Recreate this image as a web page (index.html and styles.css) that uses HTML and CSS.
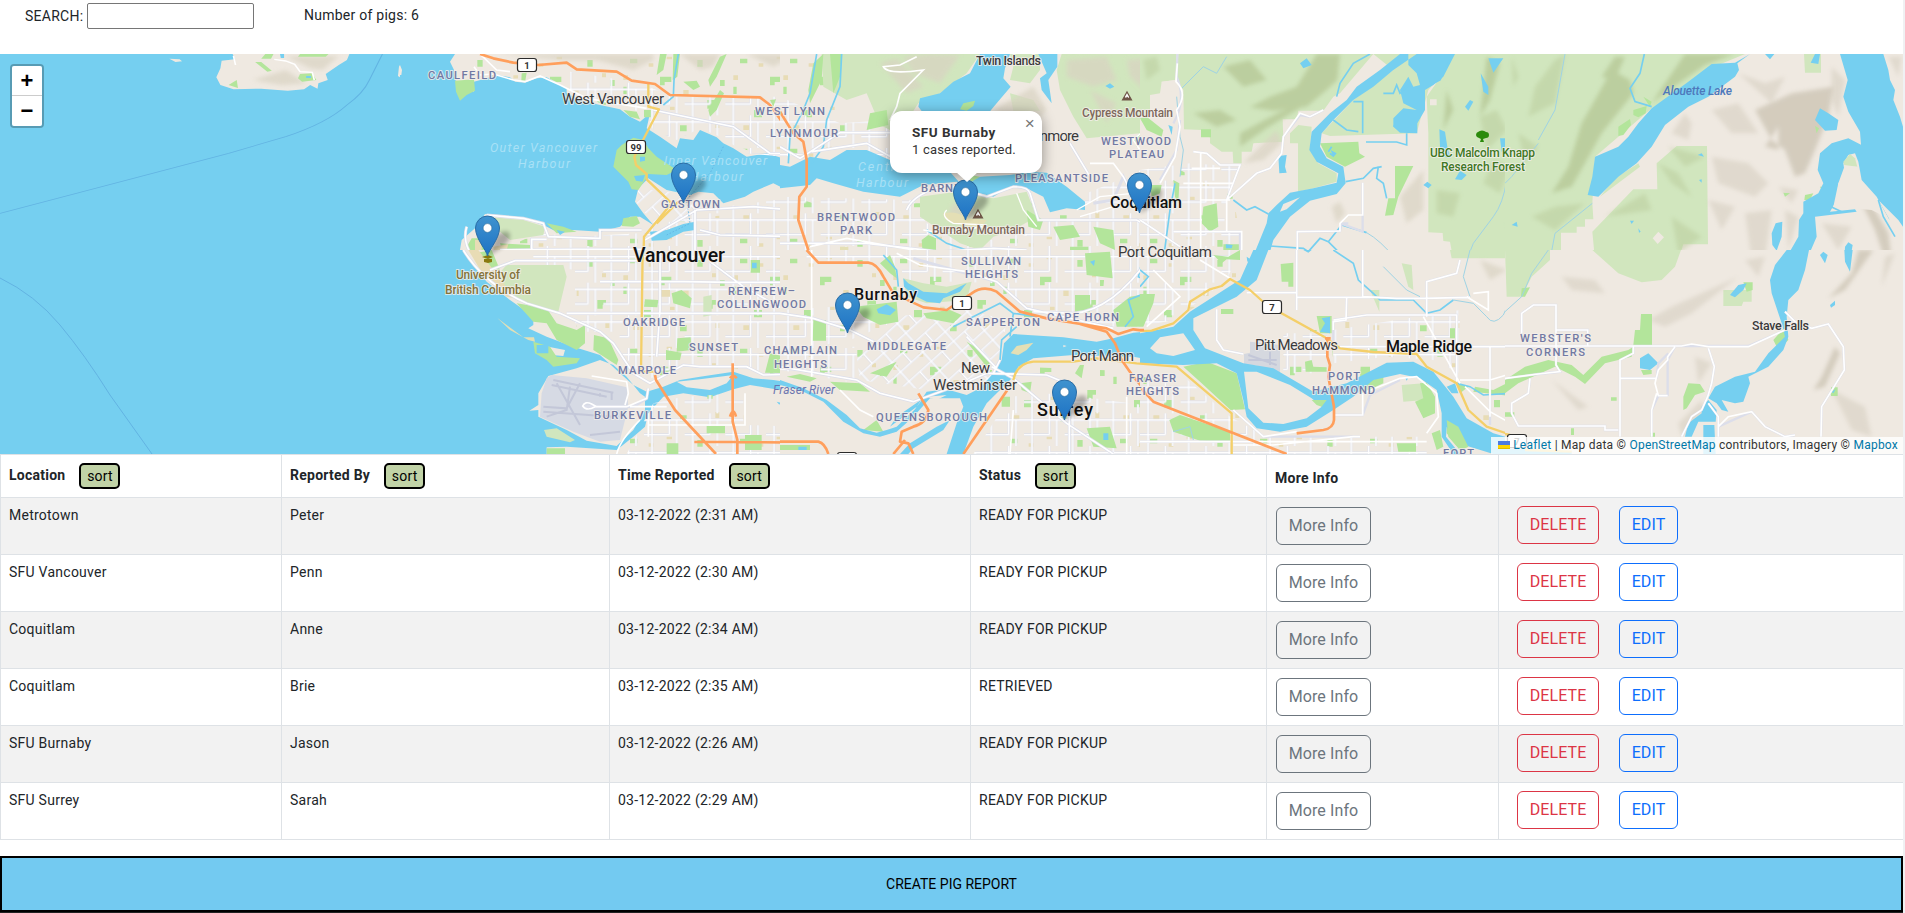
FILE: index.html
```html
<!DOCTYPE html>
<html lang="en">
<head>
<meta charset="utf-8">
<title>Pig Reports</title>
<link rel="stylesheet" href="styles.css">
</head>
<body>
<div class="page">
<header class="toolbar">
  <label class="search">SEARCH: <input type="text" class="search-input"></label>
  <span class="count">Number of pigs: 6</span>
</header>

<section class="map">
<svg class="map-canvas" viewBox="0 54 1903 400" width="1903" height="400">
  <defs>
    <pattern id="streets" width="122" height="98" patternUnits="userSpaceOnUse">
      <path class="st-edge" d="M0 20H122M0 64H76M24 0V98M76 0V64M98 20V98"/>
      <path class="st" d="M0 20H122M0 64H76M24 0V98M76 0V64M98 20V98"/>
    </pattern>
    <pattern id="diag" width="90" height="76" patternUnits="userSpaceOnUse" patternTransform="rotate(-42)">
      <path class="st-edge" d="M0 20H90M0 58H90M24 0V76M68 20V58"/>
      <path class="st" d="M0 20H90M0 58H90M24 0V76M68 20V58"/>
    </pattern>
    <pattern id="lots" width="330" height="270" patternUnits="userSpaceOnUse">
      <path class="park" d="M30 26h22v14h-22zM120 80h34v16h-20v10h-14zM232 30h16v20h-16zM72 180h24v22h-24zM262 150h26v14h-10v12h-16zM180 226h20v18h-20zM300 90h14v18h-14zM10 110h10v22h-10z"/>
      <path class="lot" d="M86 40h14v10h-14zM190 120h16v18h-16zM40 226h18v14h-18zM286 216h12v18h-12zM150 170h14v10h-14zM276 70h12v12h-12zM140 20h16v8h-16zM10 76h14v14h-14z"/>
    </pattern>
    <filter id="soft" x="-20%" y="-20%" width="140%" height="140%"><feGaussianBlur stdDeviation="7"/></filter>
    <filter id="shade" x="-50%" y="-50%" width="200%" height="200%"><feGaussianBlur stdDeviation="2"/></filter>
    <linearGradient id="pin" x1="0" y1="0" x2="0" y2="1"><stop offset="0" stop-color="#3f93cf"/><stop offset="1" stop-color="#1d72c4"/></linearGradient>
    <g id="marker">
      <path d="M0 0L8 -19Q15 -26 21 -24Q25 -19 18 -12Q9 -4 0 0Z" fill="#000" opacity=".28" filter="url(#shade)"/>
      <path d="M0 0C-1 -6 -12 -17 -12 -28A12 12 0 0 1 12 -28C12 -17 1 -6 0 0Z" fill="url(#pin)" stroke="#2a6ca5" stroke-width="1"/>
      <circle cy="-28" r="4.4" fill="#fff" stroke="#2e6c97" stroke-width=".6"/>
    </g>
    <g id="peak"><path d="M-4.5 4L0 -4L4.500 4Z" fill="#fff" stroke="#6f5547" stroke-width="1.200"/><path d="M-4.500 4L-2.500 .5L-1 2L0 .5L1.500 2L2.500 .5L4.500 4Z" fill="#6f5547"/></g>
  </defs>
  <rect class="water" y="54" width="1903" height="400"/>

  <!-- open strait and Bowen Island -->
  <svg x="0" y="0" width="400" height="250" viewBox="0 0 980 750" preserveAspectRatio="none">
    <path class="land" d="M570 162L575 178 543 182 540 205 530 232 540 255 572 268 640 266 705 272 745 268 760 255 778 266 780 250 803 240 798 222 830 195 850 180 856 162ZM415 176L440 178 446 184 430 186ZM975 228L978 195 985 210 980 232Z"/>
    <path class="hill" filter="url(#soft)" d="M700 168L830 168 790 210 760 205ZM620 240L700 210 750 250 690 256Z"/>
    <path class="park" d="M735 162H805L798 170H730ZM650 162H670L664 176 640 176ZM625 186L640 186 666 212 655 215ZM735 222L765 220 775 240 740 245 730 235ZM560 255L580 240 583 264Z"/>
    <path class="water" d="M686 162H696V174H688ZM750 228H762V234H750Z"/>
    <path class="st" d="M572 168L577 195M672 178L700 183 722 193 735 215 765 217 770 240"/>
    <path class="ferry" d="M0 640L560 460 700 410Q800 370 850 315Q890 280 905 240L937 162"/>
  </svg>
  <path class="ferry thin" d="M0 278Q35 295 60 325T110 395L152 454"/>

  <!-- West Vancouver and downtown -->
  <svg x="400" y="50" width="400" height="210" viewBox="0 0 1200 630">
    <path class="land" d="M165 12L150 35 162 60 165 90 222 125 222 95 260 85 290 75 330 82 345 95 375 98 410 85 440 82 470 100 500 115 500 130 540 150 600 165 660 178 690 200 720 215 750 190 740 235 780 260 830 295 840 265 880 270 900 240 950 262 970 280 1000 295 1040 320 1100 310 1165 330 1165 365 1200 370V12ZM0 45L6 60 4 75 0 75Z"/>
    <path fill="url(#lots)" d="M220 12H1200V370L1165 330 1040 300 900 235 830 265 740 220 600 160 440 82 220 90Z"/>
    <path fill="url(#streets)" d="M510 65L700 95 830 140H1200V360L1150 320 1040 310 960 260 900 235 830 270 760 240 740 190 600 155 510 120Z"/>
    <path class="hill" filter="url(#soft)" d="M300 12H760V30L700 60 590 30 480 30ZM840 12H960L940 50 900 60ZM1040 12H1190L1120 50Z"/>
    <path class="park" d="M165 92L222 88 225 122 200 135 180 152 168 125ZM780 12L800 12 790 60 770 75ZM820 12H840L832 80 818 90ZM960 20L980 12 950 80 930 110 925 90ZM960 120L972 130 950 180 930 200 925 180ZM365 70L380 68 376 92 364 92ZM670 180L710 185 720 208 690 200ZM1110 150L1128 148 1120 170ZM850 95L890 92 900 110 880 120Z"/>
    <path class="land" d="M715 415L705 455 730 490 760 525 720 500 690 500 660 530 600 545 520 540 470 545 430 525 370 505 300 495 255 492 225 535 185 570 180 600 215 630H1200V440L1150 415 1120 400 1060 425 1035 440 970 460 940 430 895 425 870 435 800 420 745 385Z"/>
    <path fill="url(#lots)" d="M390 560L1200 470V630H240Z"/>
    <path fill="url(#streets)" d="M520 560L720 550 900 480 1200 440V630H400L390 545Z"/>
    <path fill="url(#diag)" d="M715 415L800 425 890 430 885 510 780 540 710 460Z"/>
    <path class="forest" d="M255 500L370 510 435 530 430 555 330 570 300 545 250 530Z"/>
    <path class="park" d="M300 580L390 585V630H270L310 610ZM215 565L255 565 270 630 225 630 200 590ZM650 300L665 285 700 263 730 270 745 295 770 320 830 360 800 375 745 372 735 390 715 420 695 418 685 395 640 350ZM440 520L490 530 530 545 470 550ZM670 505L710 498 720 520 700 530 665 528ZM1148 435L1190 432 1185 475 1150 470Z"/>
    <path class="lot" d="M225 570H245V600H225ZM280 590L325 582 315 620 285 620Z"/>
    <path class="water" d="M720 320L735 320 735 332 720 335ZM702 378L735 375 728 395 708 392ZM750 545L800 540 850 522 885 515 885 540 850 545 800 570 755 572ZM470 540L495 545 480 555Z"/>
    <path class="water line" d="M835 12L822 90 820 140 790 165M1200 260L1170 285 1165 330"/>
    <path class="st-edge major" d="M200 530Q185 580 225 630M260 495L370 505 430 520 445 560 600 565 600 540 725 540M440 568H395V630M300 600L520 598H730M735 570L890 480 1060 470 1200 482M885 480V630M900 540L960 555 1200 560M760 180L1000 230 1110 310 1200 312"/>
    <path class="st major" d="M200 530Q185 580 225 630M260 495L370 505 430 520 445 560 600 565 600 540 725 540M440 568H395V630M300 600L520 598H730M735 570L890 480 1060 470 1200 482M885 480V630M900 540L960 555 1200 560M760 180L1000 230 1110 310 1200 312M222 50L240 75 280 72 340 90 375 95 420 78 480 105 560 145 740 175M240 12L290 60 330 65"/>
    <path class="yellow" d="M745 100V170L777 178 703 320 708 345 740 372V388L815 460 732 560 730 630M835 455L770 520"/>
    <path class="orange" d="M240 12L280 25 340 38 415 45 500 38 530 58 650 65 695 92 765 102 810 135 1080 142 1110 165 1160 235 1200 270M1197 435V520"/>
    <path class="ferry" stroke-dasharray="5 5" d="M970 290L930 370 860 450 870 520 800 555"/>
  </svg>

  <!-- UBC, Vancouver south, Sea Island -->
  <svg x="400" y="250" width="400" height="210" viewBox="0 0 1200 630">
    <rect class="water" width="1200" height="630"/>
    <path class="land" d="M190 0L220 45 260 95 330 150 380 185 400 210 400 225 385 235 440 260 520 290 600 315 660 370 700 405 740 425 790 410 840 390 900 380 1000 365 1060 385 1120 390 1200 402V0ZM445 378L530 355 600 330 640 345 680 380 720 430 735 440 735 480 700 540 650 588 560 572 500 540 415 500 415 480 388 482 415 465 415 430ZM440 612V592L500 590 650 600 700 560 735 530 745 490 790 440 850 430 930 442 1000 418 1050 405 1200 430V612ZM830 395L900 388 1000 375 980 400 930 420 860 412ZM445 290L495 300 490 318 455 315Z"/>
    <path fill="url(#lots)" d="M530 0H1200V390L1000 355 850 370 750 400 650 320 530 230Z"/>
    <path fill="url(#streets)" d="M400 0H1200V380L1000 350 850 345 740 390 655 300 660 245H525V60L400 40Z"/>
    <path fill="url(#lots)" d="M750 490L840 440 1030 430V520H1200V612H650Z"/>
    <path fill="url(#streets)" d="M760 460L850 440 1030 430V525L1200 530V612H680Z"/>
    <path class="forest" d="M270 100L320 45 490 45 500 80 475 185 430 175 350 150ZM1000 525Z"/>
    <path class="forest" d="M910 140L935 135V195L910 200ZM432 540L470 535 525 570 510 577 440 560Z"/>
    <path class="park" d="M350 160L440 175 470 220 530 240 555 225V280L530 300 470 270 440 220 400 215ZM582 255L625 265 655 330 650 345 580 300ZM400 275L450 290 470 320 540 325 530 340 460 350 440 330 405 310ZM815 130L845 120 875 145 870 175 820 160ZM735 148L775 150 772 172 732 170ZM832 265L872 262 875 300 830 305ZM798 300L845 308 840 330H798ZM1052 30H1080V68H1052ZM1110 310L1200 330V370L1095 368ZM440 595H495V612H440ZM800 580H835V612H800ZM920 528H975V550H920ZM1035 555H1085V600H1035ZM225 10L275 0 300 60 265 55Z"/>
    <path class="water" d="M1056 38H1070V55H1056ZM410 285H445V310H410ZM1130 455L1142 458 1138 464ZM1150 590L1190 585 1200 600H1160Z"/>
    <path class="lot" d="M205 0L235 0 310 100 345 145 320 140 250 75ZM780 120H810V140H780Z"/>
    <path class="sand" d="M292 204L330 240 385 270 405 275 402 262 370 262Z"/>
    <path fill="#d6dae4" d="M455 375L560 385 680 412 685 470 660 570 600 575 520 545 420 500 425 430 440 385Z"/>
    <path class="runway" d="M460 390L640 428M470 400L540 525M455 405L620 440M430 485L640 500M430 470L500 475 540 400M510 410L500 480 440 500M570 555L660 545M600 430V440M635 425V450"/>
    <path class="st-edge major" d="M190 0Q250 100 380 160L480 190 600 245 640 280 700 370 750 400 850 345 900 350H1040L1090 375 1200 372M500 190H1200M780 0V180L770 320M930 35L1030 110 1200 205M600 95H850L1000 97H1200M270 60L345 32H720M550 470H700L740 445 745 415"/>
    <path class="st major" d="M190 0Q250 100 380 160L480 190 600 245 640 280 700 370 750 400 850 345 900 350H1040L1090 375 1200 372M500 190H1200M780 0V180L770 320M930 35L1030 110 1200 205M600 95H850L1000 97H1200M270 60L345 32H720M575 378L680 395 685 430 675 465M585 470H680L740 445 745 415M585 470Q560 485 548 468Q555 452 575 462L590 470M690 470H800M1035 430V525H745M650 612Q660 570 720 510M745 490V560"/>
    <path class="yellow" d="M728 0L723 365H765"/>
    <path class="orange" d="M765 375L768 390 825 480 948 612M998 340V515L1012 570V612M883 576H1010L1200 578M990 385Q1000 370 1010 385M990 500Q1000 470 1008 500"/>
  </svg>

  <!-- North Vancouver east, Burrard Inlet, Port Moody -->
  <svg x="780" y="50" width="400" height="210" viewBox="0 0 1200 630">
    <rect class="land" width="1200" height="630"/>
    <path fill="url(#lots)" d="M0 12H200V330H0ZM100 460H1200V630H0V430Z"/>
    <path fill="url(#streets)" d="M0 140L180 220 330 210 330 330 200 290 100 310 0 320ZM0 440L400 450 440 520 540 560 640 570 780 510H900L920 430 1040 380 1130 420H1200V630H0Z"/>
    <path class="forest" d="M125 12H500L600 12 560 70 480 130 415 160 400 183 330 240 300 225 260 130 200 150 130 110ZM845 12H1200V230L1110 220 1080 250 920 265 880 200 840 120 830 60ZM420 440L530 425 640 445 740 425 770 500 700 540 640 560 600 600 540 580 420 500ZM690 12H780V60L750 100 690 90 700 50ZM690 130L760 150 780 183H700Z"/>
    <path class="hill" filter="url(#soft)" d="M370 20L450 12 540 15 480 100 400 70ZM300 40L350 25 430 110 380 130ZM860 30L980 20 1010 90 940 110 860 80ZM1040 30L1180 20 1170 90 1110 140 1050 80ZM930 120L1010 160 980 220ZM640 180L760 110 800 180 750 230ZM520 460L590 470 580 540 500 500Z"/>
    <path class="park" d="M100 40L130 12 125 90 90 160 85 120ZM150 12L185 12 180 80 160 130ZM270 190L320 180 325 225 260 240ZM425 570L445 555 468 565V612H428ZM1060 270L1100 225 1140 260 1140 300 1110 290 1100 260 1070 290ZM1100 400H1150L1140 460 1100 450ZM740 480L790 510 780 540 745 530ZM820 530L880 525 900 560 840 570ZM940 530L1000 540 1005 600 960 580ZM870 590H925V612H870ZM570 375L600 380 570 405Z"/>
    <path class="sand" d="M490 490Q530 480 560 505L620 510Q610 535 550 525Q490 520 490 490ZM540 370L600 370 700 350 640 340 560 350ZM180 590H205V630H180Z"/>
    <path class="water" d="M600 12L690 12 675 55 670 85 692 110 650 160 625 190 430 190 415 170 420 145 480 130 520 95 570 70ZM775 12H832V50L805 90 815 160 785 120 780 85 800 70ZM976 108L990 100 1003 110 990 116ZM0 345L30 350 90 320 150 330 200 300 260 300 330 330 500 355 550 410 600 380 690 375 750 365 800 368 860 410 915 455 915 480 860 475 810 487 790 440 740 415 690 410 640 440 560 420 530 395 430 405 360 440 250 425 160 400 110 385 90 405 0 415Z"/>
    <path class="water line" d="M110 12L90 130 70 180 30 260 25 340M185 12L180 110 140 210 130 290 95 340M1170 420L1200 440M1165 470L1160 630M440 540L500 580 560 600"/>
    <path class="park" d="M550 160L585 152 580 168 560 182 540 178Z"/>
    <path class="st-edge major" d="M0 290L60 325 180 248 335 248M95 305L260 280 340 325M380 480Q400 430 500 405L620 440 700 410Q745 410 750 430L775 510H1070L1200 580M0 580H260L480 605 640 595 740 600M1090 500L1030 380 1000 450 940 460M870 280L930 380"/>
    <path class="st major" d="M0 290L60 325 180 248 335 248M95 305L260 280 340 325M380 480Q400 430 500 405L620 440 700 410Q745 410 750 430L775 510H1070L1200 580M0 580H260L480 605 640 595 740 600M90 590L200 565 400 600M870 280L930 380M1090 500L1030 380 1000 340 930 340M1110 225L1060 270 1100 330 1060 400M410 20L360 45 310 50Q320 75 430 60L360 130 350 170 330 210M540 545L600 530 740 555"/>
    <path class="st" d="M430 540L490 550 540 545M500 480Q480 500 520 520L620 525M710 430L730 480 770 530M890 480L960 440 1060 430M900 500L1000 470"/>
    <path class="orange" d="M0 185L40 250 70 275 80 330V410L58 440 55 510 85 600 110 630"/>
  </svg>

  <!-- Burnaby, New Westminster, Surrey -->
  <svg x="780" y="250" width="400" height="210" viewBox="0 0 1200 630">
    <rect class="land" width="1200" height="630"/>
    <path fill="url(#lots)" d="M0 0H980L960 230 700 210 620 400 440 410 230 390 0 350ZM720 350L1200 370V612H570L680 440Z"/>
    <path fill="url(#streets)" d="M80 0H1200L1100 230 980 230 780 190 640 100 370 90 290 40H80ZM0 180L340 160 330 220 210 270 0 310ZM690 440L830 430 1200 480V612H580Z"/>
    <path fill="url(#diag)" d="M330 200L560 180 680 210 660 330 620 400 440 420 240 390 230 320Z"/>
    <path fill="url(#streets)" d="M0 290H230V400L0 360Z"/>
    <path class="forest" d="M370 85L430 100 500 110 575 95 560 150 440 160 380 140Z"/>
    <path class="park" d="M225 170L350 155 355 215 300 225 250 200ZM100 210H138V272H98ZM430 190L510 180 545 195 520 220 440 205ZM915 10L990 5 998 85 920 75ZM1000 180L1050 140 1110 130 1095 230H1010ZM885 135H930V185H885ZM300 40L330 15 345 50 350 85 330 70ZM560 275L585 290 630 340 620 350ZM270 370L350 335 320 380ZM150 395L240 400 270 425 180 420ZM20 380L60 372 110 385 90 395ZM250 540L290 510 310 545ZM920 535L990 530 1010 595 940 590ZM720 400L755 395 750 430 725 420ZM900 345L912 345 905 385 885 370ZM0 585H90V600H0ZM840 390L880 400 870 430ZM665 440H690V470H665Z"/>
    <path class="water" d="M290 178L320 163 348 180 330 196 295 190ZM370 85L385 100 430 125 500 130 560 100 540 125 490 145 480 160 440 155 400 135 372 110ZM930 35L945 30 942 48ZM970 550H985V570H970ZM55 590H80V600H55Z"/>
    <path class="water line" d="M310 15L350 60 355 110M520 230L660 160 700 190 770 200M700 190L690 260M1095 0L1075 80 1110 95 1095 130 1045 150 1060 200 1035 230M660 330L665 270 710 230"/>
    <path class="water" d="M1200 225L1150 240 1060 248 1000 265 950 275 850 262 700 252 672 280 665 330 640 370 600 415 560 435 500 418 440 425 405 478 350 530 320 540 290 548 240 535 200 495 140 450 70 415 0 390V405L60 420 130 455 190 515 250 550 300 560 350 545 400 500 450 445 540 445 550 470 530 520 500 612H550L580 530 620 460 660 420 700 380 715 350 760 325 880 315 1060 320 1200 345ZM360 612L390 580 470 530 510 510 490 540 400 595 385 612ZM330 530L350 500 430 445 410 470Z"/>
    <path class="land" d="M1110 295L1150 250 1200 250V320L1130 305ZM440 440L500 435 470 450ZM850 285L860 288 850 292Z"/>
    <path class="sand" d="M692 310L710 288 760 278 740 300 715 315Z"/>
    <path class="st-edge major" d="M0 350L230 390 300 430 400 455 550 400 620 370 800 375 860 400M400 25L540 65 650 95 740 175 1000 235M0 190L100 205 210 240 290 280M635 350L700 385 860 520 1000 612M560 260L650 355M1110 20Q1000 180 880 190L760 185M660 330L640 370M868 480V612"/>
    <path class="st major" d="M0 350L230 390 300 430 400 455 550 400 620 370 800 375 860 400M350 10L420 45 560 65 650 95 740 175 1000 235M0 190L100 205 210 240 290 280M635 350L700 385 860 520 1000 612M560 260L650 355M1110 20Q1000 180 880 190L760 185M660 330L640 370M868 480V612M95 0V380M180 420L240 480 280 500M700 480L690 612M1040 440V612"/>
    <path class="yellow" d="M700 390Q710 340 760 335H880L950 325 1070 340 1200 350M1090 242L1160 225 1200 190"/>
    <path class="orange" d="M80 0L115 38H265Q290 40 310 80L340 130 430 172 500 180 575 130Q610 105 650 125L720 185 800 205 920 225 980 235 1015 252 1060 238 1090 242M900 222L980 245 1005 280 1025 330 1060 380 1120 450 1200 490M682 420L550 612M415 430L445 480Q440 520 400 530L365 545 360 575 385 580 400 612M340 612L375 570M0 575H115Q135 580 145 612"/>
  </svg>

  <!-- Port Coquitlam, Pitt River -->
  <svg x="1140" y="50" width="400" height="210" viewBox="0 0 1200 630">
    <rect class="land" width="1200" height="630"/>
    <path fill="url(#lots)" d="M0 400L120 360 280 440 300 560V630H0Z"/>
    <path fill="url(#streets)" d="M0 360L150 340 300 350 260 450 250 545 300 550V630H0Z"/>
    <path class="forest" d="M0 12H110L105 90 65 95 60 130 30 135V190L0 200ZM115 12H700L600 130 580 140 550 182 475 182 470 208 428 208 430 275 340 280 335 305 305 305 305 340H280L278 305H245L210 280V262L185 258V240L132 238 130 120 110 90ZM700 12H960L865 120 830 250 570 258 545 250 640 150 760 60ZM950 12H1200V630H1000L980 605 935 603 930 575 910 573 908 549 865 547V250L860 140ZM475 225L515 230 510 300 535 340 590 370 590 395 520 415 474 425V280H450V250Z"/>
    <path class="hill green-hill" filter="url(#soft)" d="M530 12H600L592 90 560 120 500 170 400 182 330 172 390 140 470 110ZM300 250L420 185 520 150 470 180 380 235 300 290ZM1040 20L1080 40 1050 150 1020 200ZM250 50L330 30 380 90 310 110ZM160 190L240 180 290 210 230 230ZM920 120L940 180 910 240Z"/>
    <path class="hill green-hill faint" filter="url(#soft)" d="M1020 200L1070 180 1100 240 1040 300ZM1060 330L1110 350 1080 430 1030 400ZM1120 60L1170 30 1190 120 1140 160ZM890 420L960 430 940 500 890 490ZM1100 520L1180 540 1150 600ZM10 30L50 20 60 60 20 90Z"/>
    <path class="hill" filter="url(#soft)" d="M310 340L410 240 425 280 370 330ZM575 470L600 455 615 490 590 520ZM780 440L850 360 850 480 800 520Z"/>
    <path class="park" d="M540 280L655 275 658 310 675 320 615 350 560 320ZM765 348H820L775 440 760 495 735 497 745 445H765ZM183 238H213V262H183ZM0 205L20 200 70 240 65 260 20 240ZM250 583H300V625H250ZM190 470L230 460 235 530 210 545 185 520ZM100 390L118 400 115 460 105 440ZM30 405H65L60 430 35 440Z"/>
    <path class="water" d="M780 12L720 60 650 110 620 150 570 190 515 245 508 300 530 335 595 370 590 398 520 415 450 428 410 465 385 490 380 520 335 630H383L400 570 450 500 510 452 590 432 617 400 610 350 560 325 540 290 545 250 580 210 640 150 700 110 760 60 830 12ZM805 12H945L910 80 880 105 855 120 855 180 832 220V250L780 248 760 230V205L790 175 830 180 790 160 780 120 805 80 820 110 840 105 830 70 805 45ZM415 318L440 315 435 350 440 368 418 370ZM480 40L500 25 515 45 490 55ZM1045 25H1090L1060 68ZM1022 70L1045 110V135L1030 125ZM975 170L990 150 1000 155 985 182ZM898 238L915 245 922 290 932 325 912 320 900 290ZM1080 265H1095L1098 300 1085 305ZM945 388L960 362 980 375 965 390ZM850 405L862 395 875 405 865 415ZM572 300L590 310 580 322ZM1115 520L1132 518 1130 532H1118ZM85 225L98 230 95 255ZM257 583L278 585 275 595H258Z"/>
    <path class="land" d="M420 485L430 462 480 442 440 478ZM870 148H890V166H870ZM65 95L110 90 112 120 70 130Z"/>
    <path class="water line" d="M690 12L640 40 600 100 590 140M640 155H668V250M580 210L620 240 655 245M760 228H820M678 276H770L800 285V250M730 130L760 130 770 105 780 130 810 100M617 395L670 385 700 355 725 350M715 350L710 385 730 400 740 445M280 450L320 480 345 470 385 492M390 588L490 595 505 605 540 565 565 575 620 630M565 575L605 525 680 548M105 400L90 480 70 630M575 290L565 305M580 318L570 310M930 30L900 90 860 110"/>
    <path class="brook" d="M110 140L120 260 130 300 120 380M680 548Q720 570 770 630M1200 290Q1150 330 1130 370L1100 390Q1090 460 1060 500L1000 580 980 630M120 120L190 50 230 70 260 20"/>
    <path class="st-edge" d="M100 220Q140 150 110 80L112 12M120 210L110 300 60 390M550 180L510 200 480 195 430 260 425 310 390 355 350 370 260 450M668 398V545L602 520H625M472 630V545L600 543 605 520M160 305L200 310 240 345 300 345 260 450M0 510L120 590M100 545H300V630"/>
    <path class="st major" d="M112 40L108 95Q145 130 110 180L120 230 105 320 60 400M550 180L510 200 480 190 430 260 425 310 390 355 350 370 260 450M668 398V495H625L600 520 600 543 472 545V630M0 510L120 590M100 545H305V630M160 305L200 310 240 345 300 345 260 450V545M155 355H240M130 400H280M180 450H270M182 310V630"/>
  </svg>

  <!-- Pitt Meadows, Maple Ridge -->
  <svg x="1140" y="250" width="400" height="210" viewBox="0 0 1200 630">
    <rect class="land" width="1200" height="630"/>
    <path fill="url(#lots)" d="M0 0H300V90L100 210 0 230ZM430 240H540V380H430ZM570 220L960 190V370L880 330 700 330 580 340ZM0 380L180 400 380 560H860V612H0ZM960 420H1080V520H1020Z"/>
    <path fill="url(#streets)" d="M0 0H300L260 90 100 210 0 230ZM580 240L960 180V370L880 330 740 320 580 340ZM0 380L120 370 270 500 380 560H860V612H0ZM430 250H560V370H430Z"/>
    <path class="forest" d="M930 0H1200V60L1150 120 1105 143 1098 25H935ZM785 40L815 45 820 120 805 110ZM785 405L850 400 855 450 790 455ZM690 120H718V185Z"/>
    <path class="hill" filter="url(#soft)" d="M1020 30L1100 60 1050 90Z"/>
    <path class="park" d="M422 42L460 38V110H445V95H425ZM0 132H45L40 160 10 230H0ZM243 177H280V192H243ZM530 198H575V250H540ZM130 350L200 335 290 370 315 478 272 480 185 400ZM88 510L120 495 270 545V575L180 572 100 545ZM495 335L515 330 520 350 560 352 560 365H497ZM530 455L545 470 530 485ZM662 350H690V375L660 385ZM660 400L730 380 730 400 665 430ZM840 400L860 398 885 440 885 490 850 505 825 455 850 445ZM875 550L900 540 910 590 890 600ZM920 505L950 525 985 590 960 600 920 550ZM1060 420L1100 400 1200 345V400L1130 440 1000 425 1005 410ZM1095 490H1120V500H1095ZM1142 112L1170 115 1160 130 1145 140ZM770 580H828V605H775ZM930 235H945V265H930ZM220 15L265 20 300 0 300 30 260 28 245 40ZM950 400L985 410 960 430Z"/>
    <path fill="#d5d8df" d="M330 275L420 285V370L345 345 312 345 312 312 330 308Z"/>
    <path class="runway" d="M325 330L410 330M325 315L410 345M390 305V345"/>
    <path class="water" d="M340 0H385L350 90 290 140 160 205V240L195 295 310 340 400 355 520 425 620 400 740 338 820 335 880 365 940 440 980 505 1060 550 1200 590V612H1060L955 580 920 530 918 560 960 612 940 612 905 560 905 490 890 420 840 385 780 372 700 390 640 440 580 480 500 530 420 545 350 535 320 500 310 450 290 370 230 340 130 345 0 340V250L100 230 150 185 290 95 300 90ZM490 0H515L505 8ZM545 205L570 200V250L540 245 555 220ZM320 20L335 30 322 35ZM920 410L945 400 955 430 935 430ZM795 382L804 385 800 392Z"/>
    <path class="land" d="M30 295L60 262 130 250 165 300 100 318 50 310ZM312 365H350L450 405 515 445 545 470 500 505 430 522 370 518 325 475Z"/>
    <path class="park" d="M515 450L560 450 545 470 530 465ZM920 510L955 530 985 590 960 600 925 560Z"/>
    <path class="water line" d="M580 0L640 40 655 90 700 130 720 150 820 150 860 190 900 180 940 150M0 60L25 80 0 110M950 400L990 410 1030 435 1110 430"/>
    <path class="brook" d="M730 50L800 120 840 140M940 150L1000 160 1040 200Q1060 230 1090 195L1110 150 1190 90M990 0L970 80 990 140M100 545L150 530 160 570"/>
    <path class="st-edge" d="M470 0V180M230 178V270L250 300 310 312M320 128H470V142H690M668 0V140L770 145H850L990 142M580 210L680 195H950V395M620 142L618 210 580 215V290H1200M860 200V95L950 70 960 30M585 495H668L690 435 780 390M280 480L370 560H660M0 575H370M1050 290V525M1150 290V190L1180 165H1200"/>
    <path class="st major" d="M470 0V180M230 178V270L250 300 310 312M320 128H470V142H690M668 0V140L770 145H850L990 142M1000 130L1045 125V180L980 140M580 210L680 195H950V395M620 142L618 210 580 215V240M600 290H1200M860 200V95L950 70 960 30M585 495H668V430L780 385 830 380 890 430 895 500 860 550M280 480L370 560 470 545M280 585H400L640 560H660M0 575H860M1050 290V500M850 200L960 400M1150 290V190L1180 165H1200M975 410L1050 485 1130 530H1200M180 30L270 85M40 60L120 140 20 230M960 390L1050 390 1100 375 1180 365"/>
    <path class="yellow" d="M0 243L35 242 100 220 145 180 150 155 210 118 245 108 270 87 330 120 380 165 560 265 600 295 700 306 830 312 860 350 950 400 985 480 1040 530 1105 552M0 341L110 350 275 490V612"/>
    <path class="orange" d="M0 240H12M555 265H572M562 265V320L570 345 565 380 582 470V510Q580 535 550 540L470 550M0 412L40 455 440 612"/>
  </svg>

  <!-- Alouette and Stave Lakes -->
  <svg x="1505" y="50" width="400" height="210" viewBox="0 0 1200 630">
    <rect class="land" width="1200" height="630"/>
    <path class="forest" d="M0 12H720L640 45 440 175 270 320 262 460 265 508H240V530H215V548H168V600H135V630H0ZM515 288H606L609 583H535L520 630H270L262 545 385 418H457L455 340ZM897 12H948V68H900ZM285 440L330 385 400 340 405 350Z"/>
    <path class="hill green-hill" filter="url(#soft)" d="M540 12H690L600 45 500 115 440 160 480 100ZM320 60L375 90 385 130 290 250 240 340 200 410 140 430 190 350 230 220ZM330 20L360 20 330 90 290 80Z"/>
    <path class="hill green-hill faint" filter="url(#soft)" d="M150 30L180 12 150 160 70 200 90 110ZM20 20L40 80 25 110ZM80 500L150 470 240 460 150 540ZM460 340L520 370 560 440 500 400ZM300 500L420 430 440 480ZM490 290L600 320 540 350ZM500 500L590 560 520 610ZM40 250L100 290 60 340Z"/>
    <path class="hill grey-hill" filter="url(#soft)" d="M750 180L860 130 985 110 970 200 930 300 900 370 870 380 840 300 800 270ZM820 230L780 290 820 300Z"/>
    <path class="hill grey-hill faint" filter="url(#soft)" d="M700 70L780 100 840 80 800 160ZM540 190L560 220 550 270 500 250ZM620 180L680 250 760 250 700 160ZM620 320L730 340 790 400 750 440 640 400ZM720 490L800 480 780 630 740 630ZM980 50L1020 90 1000 200 980 150ZM1150 20L1190 20 1180 80ZM840 480L880 500 850 600ZM950 520L1040 530 1000 600ZM1040 420L1060 400 1050 460ZM610 450L690 470 650 540ZM820 410L880 420 860 460Z"/>
    <path class="hill grey-hill" filter="url(#soft)" d="M1060 440L1110 480 1150 550 1160 630H1140L1110 540Z"/>
    <path class="park" d="M385 180L425 168 422 190 400 202 385 195ZM340 230L375 207 378 225 355 255 340 258ZM415 140L440 155 435 170ZM835 428L855 430 840 440ZM900 435L925 430 915 450 898 450ZM930 228L942 235 935 250ZM945 410H955V430Z"/>
    <path class="water" d="M735 12L690 38 620 42 550 95 440 175 400 220 370 260 340 290 270 320 262 380 248 435 280 440 340 380 395 340 440 290 480 225 550 170 610 140 690 80 702 60 697 40ZM1005 12H1135L1150 60 1155 90 1170 120 1165 150 1185 200 1194 230V540L1150 505 1115 440 1070 390 1060 335 1050 310 1030 315 1015 340 1020 375 1000 400 995 450 975 485 1050 478 1055 485 930 500 935 560 905 630H840L880 560 882 510 895 490 895 455 940 430 955 400 938 360 945 310 980 280 1030 265 1068 284 1065 245 1030 185 1015 140 1028 90ZM780 12H808L795 28ZM917 38L930 12H945L940 42ZM930 210L945 175 970 190 1000 210 995 240 960 242ZM800 550L812 520 832 515 830 560 815 602 802 585ZM1020 590L1030 577 1043 585 1035 630H1018ZM950 610L965 612V630H945ZM20 525L35 515 38 530ZM578 315L590 310 597 320ZM582 390L590 388V398ZM375 512L387 512 380 522ZM400 535L407 545 402 548Z"/>
    <path class="forest" d="M1015 335L1035 312 1050 325 1057 350 1018 345Z"/>
    <path class="land" d="M1018 350L1057 350 1065 390 1110 440 1150 505 1100 480 985 470 1000 400ZM443 565L460 545 477 562 458 582ZM1120 450L1180 510 1194 530V545L1160 520Z"/>
    <path class="water line" d="M418 12L405 70 375 115 390 155 440 170M1120 450L1135 500 1170 560M978 470L1010 485"/>
    <path class="brook" d="M180 12L150 180 100 270M0 400L20 380 100 280M262 460L150 550 135 630"/>
  </svg>
  <svg x="1505" y="250" width="400" height="210" viewBox="0 0 1200 630">
    <rect class="land" width="1200" height="630"/>
    <path class="forest" d="M0 0H135V30L80 80 50 140H5ZM262 0H528L510 50 470 90 410 97 340 70ZM655 120H740V155H715L710 168H655Z"/>
    <path class="hill grey-hill faint" filter="url(#soft)" d="M170 80L270 90 300 130 200 120ZM430 210L500 170 700 80 560 190 480 230ZM720 30L780 20 760 80ZM980 420L1080 470 1100 560 1040 540ZM140 390L250 470 220 480ZM520 520L590 450 600 480 530 560ZM570 320L620 340 580 400ZM1140 20L1170 10 1130 110Z"/>
    <path class="hill grey-hill" filter="url(#soft)" d="M1060 0H1105L1020 120 970 145 1040 70ZM950 380L990 290 1005 310 960 410 925 420Z"/>
    <path class="park" d="M408 192H441V285H385L390 240H405ZM0 390L60 350 130 330 200 345 235 375 290 320 370 300 385 290 380 320 300 340 240 402 210 380 150 350 40 400 0 430ZM535 440L550 400 585 402 600 425 570 435 545 475 535 480ZM408 360H440V372L415 375ZM715 97H743V120L725 125ZM978 412H998V438H978ZM318 442H335V452H318ZM50 115L75 112 60 140H48ZM198 535H207V555H198ZM0 487H28V500H0ZM805 270L840 230 850 270 820 300ZM437 548H450V560H437Z"/>
    <path class="water" d="M845 0H912L900 60 880 120 850 150 845 200 850 260 835 300 790 350 730 380 735 400 715 455 690 460 650 450 670 485 650 480 635 460 610 445 630 410 690 380 750 365 790 310 840 260 830 220 800 130 795 90 810 45ZM405 325L430 310 460 340 435 360 405 355ZM675 135L700 105 725 100 715 120 690 142ZM945 15L955 5 968 15 960 40ZM1018 0H1043L1035 65 1020 35ZM975 165L990 152 990 165 978 173ZM610 450L635 480 632 515 580 515 560 560H540L550 520 590 490 590 470ZM595 525H628L632 612H595ZM980 425L992 418 985 430ZM0 595L200 605V612H0Z"/>
    <path class="brook" d="M130 0L80 70 50 140 0 185"/>
    <path class="st-edge" d="M0 288H730L840 240M50 250V190L85 165H153V240H248V290M153 165V345L165 365 100 372 0 385M345 560V330L385 310V290M345 385H455M488 437H460L440 480V560M488 437V330L510 290M455 385L460 340 490 310M610 295L628 350 620 400 608 440 590 480 560 500 530 560M610 460L640 500 640 560M640 530L740 485 780 530 840 560 870 555M840 185L870 215 920 235 970 222 1015 290 1018 360 950 470 948 560M75 385L70 430 20 460 20 490 40 528H300V540H340"/>
    <path class="st major" d="M0 288H530L560 282 610 290H730L840 240M50 250V190L85 165H153V240H248V290M153 165V345L165 365 100 372 0 385M345 560V330L385 310V290M345 385H455M488 437H460L450 400 460 360 488 330V320L510 290M455 430L440 480V560M610 295L628 350 620 400 608 440 590 480 560 500 530 560M610 460L640 500 640 560M640 530L670 500 740 485 780 530 840 560 870 555M840 185L870 215 920 235 970 222 1015 290 1018 360 950 470 948 560M75 385L70 430 20 460 20 490 40 528H300V540H340"/>
    <path class="yellow" d="M0 552L15 555M60 600L200 605"/>
  </svg>

  <!-- route shields -->
  <g class="shield">
    <rect x="517.500" y="58.500" width="19" height="13" rx="2.500"/><rect x="626.500" y="140.500" width="19" height="13" rx="2.500"/><rect x="952.500" y="296.500" width="19" height="13" rx="2.500"/><rect x="1262.500" y="300.500" width="19" height="13" rx="2.500"/><rect x="1507.500" y="434.500" width="19" height="13" rx="2.500"/><rect x="837.500" y="452.500" width="19" height="13" rx="2.500"/>
    <text x="527" y="68.500">1</text><text x="636" y="150.500">99</text><text x="962" y="306.500">1</text><text x="1272" y="310.500">7</text><text x="1517" y="444.500">7</text>
  </g>

  <g class="area">
    <text x="428" y="79" textLength="68">CAULFEILD</text><text x="755" y="115" textLength="70">WEST LYNN</text><text x="770" y="137" textLength="68">LYNNMOUR</text><text x="661" y="208" textLength="59">GASTOWN</text>
    <text x="623" y="326" textLength="62">OAKRIDGE</text><text x="689" y="351" textLength="49">SUNSET</text><text x="618" y="374" textLength="58">MARPOLE</text><text x="594" y="419" textLength="77">BURKEVILLE</text>
    <text x="728" y="295" textLength="67">RENFREW–</text><text x="717" y="308" textLength="89">COLLINGWOOD</text><text x="764" y="354" textLength="73">CHAMPLAIN</text><text x="774" y="368" textLength="53">HEIGHTS</text>
    <text x="817" y="221" textLength="78">BRENTWOOD</text><text x="840" y="234" textLength="32">PARK</text><text x="921" y="192" textLength="47">BARNET</text><text x="1015" y="182" textLength="93">PLEASANTSIDE</text>
    <text x="1101" y="145" textLength="70">WESTWOOD</text><text x="1109" y="158" textLength="55">PLATEAU</text><text x="961" y="265" textLength="60">SULLIVAN</text><text x="965" y="278" textLength="53">HEIGHTS</text>
    <text x="966" y="326" textLength="74">SAPPERTON</text><text x="1047" y="321" textLength="72">CAPE HORN</text><text x="867" y="350" textLength="79">MIDDLEGATE</text><text x="1129" y="382" textLength="47">FRASER</text><text x="1126" y="395" textLength="53">HEIGHTS</text>
    <text x="876" y="421" textLength="111">QUEENSBOROUGH</text><text x="1328" y="380" textLength="32">PORT</text><text x="1312" y="394" textLength="63">HAMMOND</text><text x="1443" y="457" textLength="31">FORT</text><text x="1520" y="342" textLength="71">WEBSTER'S</text><text x="1526" y="356" textLength="59">CORNERS</text>
  </g>
  <g class="sea">
    <text x="490" y="152" textLength="107">Outer Vancouver</text><text x="518" y="168" textLength="52">Harbour</text><text x="664" y="165" textLength="103">Inner Vancouver</text><text x="690" y="181" textLength="53">Harbour</text><text x="858" y="171" textLength="50">Central</text><text x="856" y="187" textLength="52">Harbour</text>
  </g>
  <g class="town">
    <text x="562" y="104" textLength="102">West Vancouver</text><text x="1118" y="257" textLength="94">Port Coquitlam</text><text x="1071" y="361" textLength="63">Port Mann</text><text x="961" y="373" textLength="29">New</text><text x="933" y="390" textLength="84">Westminster</text><text x="1255" y="350" textLength="83">Pitt Meadows</text><text x="1031" y="141" textLength="48">Anmore</text>
    <g class="small"><text x="976" y="65" textLength="65">Twin Islands</text><text x="1752" y="330" textLength="57">Stave Falls</text></g>
  </g>
  <g class="city">
    <text x="633" y="262" textLength="92" class="big">Vancouver</text><text x="854" y="300" textLength="63">Burnaby</text><text x="1110" y="208" textLength="72">Coquitlam</text><text x="1037" y="416" textLength="56" class="mid">Surrey</text><text x="1386" y="352" textLength="86">Maple Ridge</text>
  </g>
  <g class="poi">
    <text x="1082" y="117" textLength="91">Cypress Mountain</text><text x="932" y="234" textLength="93">Burnaby Mountain</text>
    <g class="school"><text x="456" y="279" textLength="64">University of</text><text x="445" y="294" textLength="86">British Columbia</text></g>
    <g class="reserve"><text x="1430" y="157" textLength="105">UBC Malcolm Knapp</text><text x="1441" y="171" textLength="84">Research Forest</text></g>
  </g>
  <g class="lake"><text x="773" y="394" textLength="62">Fraser River</text><text x="1663" y="95" textLength="69" class="blue">Alouette Lake</text></g>
  <use href="#peak" x="1127" y="96"/><use href="#peak" x="978" y="214"/>
  <path d="M1477 137a3 3 0 0 1 1-5a5 4 0 0 1 8 0a3 3 0 0 1 0 6l-3 1 1 3h-4l1-3z" fill="#2b8a0c"/>
  <path d="M482 257l6-2 5 2-5 2zM484 259v3l4 1 4-1v-3" fill="#8a7a10"/>

  <use href="#marker" x="683.500" y="203"/><use href="#marker" x="1139.500" y="213"/><use href="#marker" x="965.500" y="220"/><use href="#marker" x="487.500" y="256"/><use href="#marker" x="847.500" y="333"/><use href="#marker" x="1064.500" y="420"/>
</svg>

<div class="zoom-control"><button type="button" class="zoom-btn">+</button><button type="button" class="zoom-btn">−</button></div>
<div class="popup"><b class="popup-title">SFU Burnaby</b><br>1 cases reported.<span class="popup-close">×</span></div>
<div class="attribution"><svg class="flag" width="12" height="8" viewBox="0 0 12 8"><path fill="#4C7BE1" d="M0 0h12v4H0z"/><path fill="#FFD500" d="M0 4h12v3H0z"/><path fill="#E0BC00" d="M0 7h12v1H0z"/></svg> <a>Leaflet</a> | Map data © <a>OpenStreetMap</a> contributors, Imagery © <a>Mapbox</a></div>
</section>

<table class="reports">
  <colgroup><col class="c1"><col class="c2"><col class="c3"><col class="c4"><col class="c5"><col class="c6"></colgroup>
  <thead><tr>
    <th>Location<button class="sort">sort</button></th><th>Reported By<button class="sort">sort</button></th><th>Time Reported<button class="sort">sort</button></th><th>Status<button class="sort">sort</button></th><th class="plain">More Info</th><th></th>
  </tr></thead>
  <tbody>
    <tr><td>Metrotown</td><td>Peter</td><td>03-12-2022 (2:31 AM)</td><td>READY FOR PICKUP</td><td><button class="btn info">More Info</button></td><td class="actions"><button class="btn delete">DELETE</button><button class="btn edit">EDIT</button></td></tr>
    <tr><td>SFU Vancouver</td><td>Penn</td><td>03-12-2022 (2:30 AM)</td><td>READY FOR PICKUP</td><td><button class="btn info">More Info</button></td><td class="actions"><button class="btn delete">DELETE</button><button class="btn edit">EDIT</button></td></tr>
    <tr><td>Coquitlam</td><td>Anne</td><td>03-12-2022 (2:34 AM)</td><td>READY FOR PICKUP</td><td><button class="btn info">More Info</button></td><td class="actions"><button class="btn delete">DELETE</button><button class="btn edit">EDIT</button></td></tr>
    <tr><td>Coquitlam</td><td>Brie</td><td>03-12-2022 (2:35 AM)</td><td>RETRIEVED</td><td><button class="btn info">More Info</button></td><td class="actions"><button class="btn delete">DELETE</button><button class="btn edit">EDIT</button></td></tr>
    <tr><td>SFU Burnaby</td><td>Jason</td><td>03-12-2022 (2:26 AM)</td><td>READY FOR PICKUP</td><td><button class="btn info">More Info</button></td><td class="actions"><button class="btn delete">DELETE</button><button class="btn edit">EDIT</button></td></tr>
    <tr><td>SFU Surrey</td><td>Sarah</td><td>03-12-2022 (2:29 AM)</td><td>READY FOR PICKUP</td><td><button class="btn info">More Info</button></td><td class="actions"><button class="btn delete">DELETE</button><button class="btn edit">EDIT</button></td></tr>
  </tbody>
</table>
<button class="create">CREATE PIG REPORT</button>
</div>
</body>
</html>
```

FILE: styles.css
```css
* { box-sizing: border-box; }
html { background: #f0f1f3; height: 913px; overflow: hidden; }
body { margin: 0; height: 913px; overflow: hidden; font-family: Roboto, sans-serif; font-size: 14px; letter-spacing: .25px; line-height: 20px; color: #212529; }
button { font-family: inherit; letter-spacing: inherit; margin: 0; }
.page { width: 1903px; height: 913px; overflow: hidden; background: #fff; border-bottom: 1px solid #222; }

.toolbar { height: 54px; display: flex; align-items: flex-start; padding: 3px 0 0 25px; }
.search { display: flex; align-items: center; height: 26px; width: 279px; gap: 4px; line-height: 24px; }
.search-input { width: 167px; height: 26px; border: 1px solid #767676; border-radius: 2px; padding: 0; background: #fff; }
.count { line-height: 25px; }

.map { position: relative; height: 400px; overflow: hidden; }
.map-canvas { display: block; }
.water { fill: #75cff0; }
.water.line { fill: none; stroke: #75cff0; stroke-width: 5; }
.brook { fill: none; stroke: #9fd3e4; stroke-width: 3; }
.land { fill: #efe9e1; }
.forest { fill: #d1e6be; }
.park { fill: #b3e59b; }
.lot { fill: #e8dcb5; }
.sand { fill: #e4dfb5; }
.hill { fill: #d9d3c2; opacity: .7; }
.green-hill { fill: #b3c492; }
.grey-hill { fill: #cbc3b2; opacity: .75; }
.faint { opacity: .4; }
.st { fill: none; stroke: #fff; stroke-width: 4; }
.st-edge { fill: none; stroke: #dcdeea; stroke-width: 7; }
.st.major { stroke-width: 5; }
.st-edge.major { stroke-width: 9; }
.runway { fill: none; stroke: #c3c7d8; stroke-width: 6; }
.yellow { fill: none; stroke: #f4cf69; stroke-width: 7; stroke-linejoin: round; }
.orange { fill: none; stroke: #ff9f5c; stroke-width: 8; stroke-linejoin: round; }
.ferry { fill: none; stroke: #62b3e2; stroke-width: 2.500; }
.ferry.thin { stroke-width: 1; }
.map-canvas text { letter-spacing: 0; paint-order: stroke; stroke: #f3efeb; stroke-width: 2px; stroke-linejoin: round; stroke-opacity: .8; }
.shield rect { fill: #fff; stroke: #2b2b2b; stroke-width: 1.200; }
.map-canvas .shield text { font-size: 9.500px; font-weight: 700; text-anchor: middle; fill: #333; stroke: none; }
.area { font-size: 11.200px; fill: #7179a3; font-weight: 500; }
.map-canvas .sea text { stroke: none; }
.sea { font-size: 12.500px; font-style: italic; fill: #a9e1f6; }
.town { font-size: 15px; fill: #3a3a3c; }
.town .small { font-size: 12.500px; font-weight: 500; }
.city { font-size: 16px; font-weight: 500; fill: #111; }
.city .big { font-size: 19.500px; }
.city .mid { font-size: 18px; }
.poi { font-size: 12px; font-weight: 500; fill: #7d675b; }
.school { fill: #84733a; }
.reserve { fill: #3f7725; }
.lake { font-size: 12px; font-style: italic; fill: #6c76b0; }
.map-canvas .lake text { stroke: none; }
.lake .blue { fill: #4d78bb; font-weight: 500; }

.zoom-control { position: absolute; left: 10px; top: 10px; border: 2px solid rgba(0,0,0,.25); border-radius: 4px; background-clip: padding-box; width: 34px; }
.zoom-btn { display: block; width: 30px; height: 30px; border: 0; background: #fff; padding: 0; font: bold 22px/30px "Liberation Sans", sans-serif; letter-spacing: 0; color: #000; }
.zoom-btn:first-child { border-bottom: 1px solid #ccc; border-radius: 2px 2px 0 0; }
.zoom-btn:last-child { border-radius: 0 0 2px 2px; }
.popup { position: absolute; left: 890px; top: 57px; width: 152px; height: 62px; border-radius: 12px; background: #fff; box-shadow: 0 3px 14px rgba(0,0,0,.4); padding: 13px 0 0 22px; font-size: 13px; line-height: 17px; letter-spacing: .2px; color: #333; white-space: nowrap; }
.popup-title { font-size: 13.500px; letter-spacing: .5px; }
.popup::after { content: ""; position: absolute; left: 66px; top: 61px; border: 11px solid transparent; border-top: 10px solid #fff; border-bottom: 0; }
.popup-close { position: absolute; right: 7px; top: 3px; font: 17px/20px "Liberation Sans", sans-serif; color: #757575; }
.attribution { position: absolute; right: 0; bottom: 0; width: 412px; height: 17px; padding: 0 5px; background: rgba(255,255,255,.8); font-size: 12px; line-height: 16px; letter-spacing: .23px; color: #333; white-space: nowrap; text-align: right; }
.attribution a { color: #0078a8; }

.reports { width: 1903px; table-layout: fixed; border-collapse: collapse; }
.c1 { width: 281px; } .c2 { width: 328px; } .c3 { width: 361px; } .c4 { width: 296px; } .c5 { width: 232px; } .c6 { width: 405px; }
.reports th, .reports td { border: 1px solid #dee2e6; padding: 8px; vertical-align: top; text-align: left; }
.reports th { height: 43px; padding: 8px 8px 6px; font-weight: 700; letter-spacing: .25px; line-height: 25px; }
.reports th.plain { padding-top: 10px; padding-bottom: 4px; line-height: 26px; }
.reports td { height: 57px; line-height: 18px; }
.reports tbody tr:nth-child(odd) { background: #f2f2f2; }
.sort { margin-left: 14px; width: 41px; height: 26px; padding: 0; border: 2px solid #000; border-radius: 5px; background: #c1d3a7; font-size: 14px; line-height: 20px; letter-spacing: .2px; vertical-align: top; }
.btn { height: 38px; border: 1px solid; border-radius: 6px; background: transparent; padding: 0; font-size: 16px; line-height: 34px; letter-spacing: .1px; }
.info { width: 95px; margin: 1px 0 0 1px; color: #6c757d; }
.delete { width: 82px; color: #dc3545; }
.edit { width: 59px; margin-left: 20px; color: #0d6efd; }
.reports td.actions { padding-left: 18px; }
.create { display: block; width: 1903px; height: 56px; margin-top: 16px; border: 2px solid #000; background: #73caf1; font-size: 14px; letter-spacing: 0; padding: 0; color: #000; }
```
